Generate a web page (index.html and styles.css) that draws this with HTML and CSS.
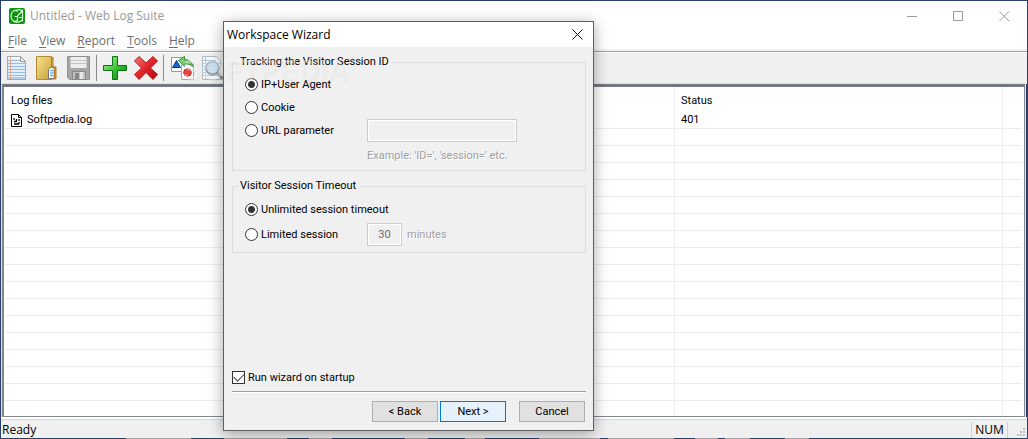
FILE: index.html
```html
<!DOCTYPE html>
<html lang="en">
<head>
<meta charset="utf-8">
<title>Untitled - Web Log Suite</title>
<link rel="stylesheet" href="styles.css">
</head>
<body>
<div class="window">
  <header class="titlebar">
    <svg class="app-icon" viewBox="0 0 16 16" aria-hidden="true">
      <rect width="16" height="16" rx="2" fill="#0c960c"/>
      <path d="M8.500 3.500C6 1 2 3.500 2 8s3.500 6.500 6.500 4.500V8.500H5.500M8.500 8l5-5.500v11M10 9.500h3.500M7 2.500c3-1.500 5-.5 6 .5M4 13c3 2 7 1.500 9-1" fill="none" stroke="#d9f5d9" stroke-width="1.200"/>
    </svg>
    <h1 class="app-title">Untitled - Web Log Suite</h1>
    <div class="window-controls">
      <button class="window-button" type="button" aria-label="Minimize"><svg class="control-icon" viewBox="0 0 11 11"><path d="M0 5.500h10"/></svg></button>
      <button class="window-button" type="button" aria-label="Maximize"><svg class="control-icon" viewBox="0 0 11 11"><path d="M.5.5h9v9h-9z"/></svg></button>
      <button class="window-button" type="button" aria-label="Close"><svg class="control-icon" viewBox="0 0 11 11"><path d="M.5.5l9.500 9.500M10 .5L.5 10"/></svg></button>
    </div>
  </header>
  <nav class="menubar" aria-label="Main menu">
    <button class="menu" type="button"><u>F</u>ile</button>
    <button class="menu" type="button"><u>V</u>iew</button>
    <button class="menu" type="button"><u>R</u>eport</button>
    <button class="menu" type="button"><u>T</u>ools</button>
    <button class="menu" type="button"><u>H</u>elp</button>
  </nav>
  <div class="toolbar" role="toolbar" aria-label="Tools">
    <div class="tool-group">
      <button class="tool" type="button" aria-label="New">
        <svg viewBox="0 0 24 24">
          <path d="M2.500.5h13l5 5v18h-18z" fill="#fff" stroke="#a8a8a8"/>
          <path d="M3 4.500h12M3 7.500h17M3 10.500h17M3 13.500h17M3 16.500h17M3 19.500h17M3 22h17" stroke="#91bde6" stroke-width="1.400"/>
          <path d="M5.500 1v22" stroke="#e2a893"/>
          <path d="M15.500.5v5h5z" fill="#eee" stroke="#999"/>
        </svg>
      </button>
      <button class="tool" type="button" aria-label="Open">
        <svg viewBox="0 0 24 24">
          <defs><linearGradient id="folder" x2="1" y2="1"><stop stop-color="#f8e38e"/><stop offset="1" stop-color="#c7a037"/></linearGradient></defs>
          <path d="M15 4l2-3v10h3v12h-5z" fill="#dba737" stroke="#a87c32"/>
          <path d="M.5.5h15v23H.5z" fill="url(#folder)" stroke="#b28b31"/>
          <path d="M12.500 13.500l2-2h4v11h-6z" fill="#fff" stroke="#777"/>
          <path d="M14 14.500h3M14 17h3M14 19.500h3" stroke="#75b1e4" stroke-width="1.500"/>
          <path d="M18.500 12v11" stroke="#be812c" stroke-width="2"/>
        </svg>
      </button>
      <button class="tool" type="button" aria-label="Save">
        <svg viewBox="0 0 24 24">
          <path d="M.5.5h22v23h-20l-2-2z" fill="#a6a6a6" stroke="#929292"/>
          <path d="M3.500 1h16v11h-16z" fill="#eee"/>
          <path d="M4 4.500h15M4 7.500h15" stroke="#c4c4c4"/>
          <path d="M5.500 15.500h13v8h-13z" fill="#c2c2c2" stroke="#898989"/>
          <path d="M8 17h4v6H8z" fill="#888"/>
          <path d="M13 16h3v7h-3z" fill="#e9e9e9"/>
        </svg>
      </button>
    </div>
    <span class="tool-separator"></span>
    <div class="tool-group">
      <button class="tool" type="button" aria-label="Add">
        <svg viewBox="0 0 24 24">
          <defs><linearGradient id="plus" x2="1" y2="1"><stop stop-color="#baf5ae"/><stop offset=".55" stop-color="#35bd30"/><stop offset="1" stop-color="#078012"/></linearGradient></defs>
          <path d="M9.500.5h5v9h9v5h-9v9h-5v-9h-9v-5h9z" fill="url(#plus)" stroke="#087511"/>
        </svg>
      </button>
      <button class="tool" type="button" aria-label="Delete">
        <svg viewBox="0 0 24 24">
          <defs><linearGradient id="cross" x2="1" y2="1"><stop stop-color="#f77b74"/><stop offset=".5" stop-color="#df2529"/><stop offset="1" stop-color="#af0912"/></linearGradient></defs>
          <path d="M5 .5l7 6.500 7-6.500 4.500 4.500-7 7 7 6.500-4.500 5-7-7-7 7-4.500-5 7-6.500-7-7z" fill="url(#cross)" stroke="#b41b20"/>
        </svg>
      </button>
    </div>
    <span class="tool-separator"></span>
    <div class="tool-group">
      <button class="tool" type="button" aria-label="Convert">
        <svg viewBox="0 0 24 24">
          <path d="M1.500 1.500h11v14h-11z" fill="#fff" stroke="#999"/>
          <path d="M2.500 11.500l4-7 4 7z" fill="#1768cd" stroke="#003994"/>
          <path d="M11.500 8.500h12v15h-12z" fill="#fafafa" stroke="#aaa"/>
          <circle cx="17.500" cy="16.500" r="3.800" fill="#ec4141" stroke="#bb2929"/>
          <path d="M8.500 4.500l6-4v3c5 0 8 3 8 7-2-2-4-3-8-3v3z" fill="#7fce70" stroke="#30933a"/>
        </svg>
      </button>
      <button class="tool" type="button" aria-label="Preview">
        <svg viewBox="0 0 24 24">
          <path d="M1.500.5h14l4 4v19h-18z" fill="#f6fafd" stroke="#b3b9c0"/>
          <path d="M2 4.500h13M2 7.500h17M2 10.500h17M2 13.500h17M2 16.500h17M2 19.500h17" stroke="#a0c3e5"/>
          <path d="M4.500 1v22" stroke="#dfb5a6"/>
          <path d="M16 17l6 6" stroke="#8b8f94" stroke-width="3"/>
          <circle cx="11.500" cy="12" r="6.500" fill="#cfe1f1" fill-opacity=".85" stroke="#8c9aa8" stroke-width="1.600"/>
        </svg>
      </button>
    </div>
  </div>
  <main class="list-view">
    <table class="log-table">
      <colgroup><col><col class="col-status"><col class="col-rest"></colgroup>
      <thead><tr><th scope="col">Log files</th><th scope="col">Status</th><td></td></tr></thead>
      <tbody>
        <tr><td><span class="log-file"><svg class="file-icon" viewBox="0 0 11 13"><path d="M.5.5h7l3 3v9H.5z" fill="#fff" stroke="#000"/><path d="M7.500.5v3h3" fill="none" stroke="#000"/><path d="M3 4v2M5.500 5v2M8 5v2M3 7.500h3M3 10h5M8 8v2" stroke="#000" stroke-width="1.300"/></svg>Softpedia.log</span></td><td>401</td><td></td></tr>
        <tr><td></td><td></td><td></td></tr>
        <tr><td></td><td></td><td></td></tr>
        <tr><td></td><td></td><td></td></tr>
        <tr><td></td><td></td><td></td></tr>
        <tr><td></td><td></td><td></td></tr>
        <tr><td></td><td></td><td></td></tr>
        <tr><td></td><td></td><td></td></tr>
        <tr><td></td><td></td><td></td></tr>
        <tr><td></td><td></td><td></td></tr>
        <tr><td></td><td></td><td></td></tr>
        <tr><td></td><td></td><td></td></tr>
        <tr><td></td><td></td><td></td></tr>
        <tr><td></td><td></td><td></td></tr>
        <tr><td></td><td></td><td></td></tr>
        <tr><td></td><td></td><td></td></tr>
        <tr><td></td><td></td><td></td></tr>
        <tr class="row-partial"><td></td><td></td><td></td></tr>
      </tbody>
    </table>
  </main>
  <footer class="statusbar">
    <span class="status-text">Ready</span>
    <span class="status-num">NUM</span>
    <svg class="grip" viewBox="0 0 9 9" aria-hidden="true"><path d="M6 0h2v2H6zM3 3h2v2H3zM6 3h2v2H6zM0 6h2v2H0zM3 6h2v2H3zM6 6h2v2H6z" fill="#bfbfbf"/></svg>
  </footer>
</div>

<form class="dialog" role="dialog" aria-labelledby="wizard-title">
  <div class="dialog-titlebar">
    <h2 class="dialog-title" id="wizard-title">Workspace Wizard</h2>
    <button class="dialog-close" type="button" aria-label="Close"><svg class="control-icon" viewBox="0 0 11 11"><path d="M.5.5l10 10M10.500 .5l-10 10"/></svg></button>
  </div>
  <div class="dialog-body">
    <fieldset class="group">
      <legend>Tracking the Visitor Session ID</legend>
      <div class="options">
        <label class="option"><input class="radio" type="radio" name="tracking" checked>IP+User Agent</label>
        <label class="option"><input class="radio" type="radio" name="tracking">Cookie</label>
        <div class="option-row">
          <label class="option"><input class="radio" type="radio" name="tracking">URL parameter</label>
          <input class="field field-url" type="text" aria-label="URL parameter name" disabled>
        </div>
        <p class="hint">Example: 'ID=', 'session=' etc.</p>
      </div>
    </fieldset>
    <fieldset class="group group-timeout">
      <legend>Visitor Session Timeout</legend>
      <div class="options">
        <label class="option"><input class="radio" type="radio" name="timeout" checked>Unlimited session timeout</label>
        <div class="option-row">
          <label class="option"><input class="radio" type="radio" name="timeout">Limited session</label>
          <input class="field field-minutes" id="minutes" type="text" value="30" disabled>
          <label class="unit" for="minutes">minutes</label>
        </div>
      </div>
    </fieldset>
    <label class="startup"><input class="checkbox" type="checkbox" checked>Run wizard on startup</label>
    <div class="actions">
      <button class="button" type="button">&lt; Back</button>
      <button class="button button-default" type="submit">Next &gt;</button>
      <button class="button button-cancel" type="button">Cancel</button>
    </div>
  </div>
</form>
<div class="watermark">SOFTPEDIA<sup>®</sup></div>
</body>
</html>
```
FILE: styles.css
```css
* {
  box-sizing: border-box;
}

body {
  position: relative;
  margin: 0;
  font: 11px/16px Roboto, "Liberation Sans", sans-serif;
  color: #000;
}

button,
input {
  margin: 0;
  padding: 0;
  border: 0;
  background: none;
  font: inherit;
  color: inherit;
}

h1,
h2,
p {
  margin: 0;
  font-size: inherit;
  font-weight: 400;
}

svg {
  display: block;
}

/* Main window */
.window {
  display: flex;
  flex-direction: column;
  min-height: 100vh;
  padding: 1px;
  background:
    linear-gradient(90deg, #2b3f69 126px, #a3a3a3 126px 191px, #2b3f69 191px 224px, #a3a3a3 224px 287px, #2b3f69 287px 309px, #a3a3a3 309px 332px, #2b3f69 332px 405px, #a3a3a3 405px 428px, #2b3f69 428px 465px, #a3a3a3 465px 485px, #2b3f69 485px 539px, #a3a3a3 539px 600px, #2b3f69 600px 608px, #a3a3a3 608px 674px, #2b3f69 674px 695px, #a3a3a3 695px 718px, #2b3f69 718px 725px, #a3a3a3 725px 750px, #2b3f69 750px 785px, #a3a3a3 785px 809px, #2b3f69 809px) bottom / 100% 1px no-repeat,
    #2b3f69;
}

.titlebar {
  display: flex;
  align-items: center;
  height: 30px;
  padding-left: 8px;
  background: #fff;
}

.app-icon {
  width: 16px;
  height: 16px;
}

.app-title {
  margin-left: 5px;
  font: 12px/16px "Open Sans", sans-serif;
  color: #999;
}

.window-controls {
  display: flex;
  margin-left: auto;
}

.window-button {
  display: grid;
  place-items: center;
  width: 46px;
  height: 28px;
}

.control-icon {
  width: 11px;
  height: 11px;
  fill: none;
  stroke: #999;
}

.menubar {
  display: flex;
  gap: 12px;
  height: 20px;
  padding-left: 7px;
  background: #fff;
  border-bottom: 2px solid #f0f0f0;
}

.menu {
  font: 12px/20px "Open Sans", sans-serif;
  color: #6d6d6d;
}

.menu u {
  text-underline-offset: 2px;
}

.toolbar {
  display: flex;
  align-items: center;
  height: 33px;
  padding-left: 4px;
  background: #f0f0f0;
  border-top: 1px solid #a0a0a0;
  box-shadow: inset 0 1px #fff;
}

.tool-group {
  display: flex;
  gap: 7px;
}

.tool {
  width: 24px;
  height: 24px;
}

.tool-separator {
  width: 1px;
  height: 26px;
  margin: 0 6px 0 5px;
  background: #8c8c8c;
}

/* Log list */
.list-view {
  flex: 1;
  padding: 0 2px 0 1px;
  background: #fff;
  border: 1px solid #828790;
  border-width: 3px 1px 1px 2px;
  border-top-color: #747980;
  margin: 0 2px 0 1px;
  outline: 1px solid #e3e3e3;
}

.log-table {
  width: 100%;
  border-collapse: separate;
  border-spacing: 0;
  table-layout: fixed;
}

.col-status {
  width: 328px;
}

.col-rest {
  width: 19px;
}

.log-table th,
.log-table td {
  height: 17px;
  padding: 0 6px;
  border-right: 1px solid #ececec;
  border-bottom: 1px solid #ececec;
  font-weight: 400;
  line-height: 16px;
  text-align: left;
}

.log-table thead th,
.log-table thead td {
  height: 25px;
  padding-top: 2px;
  border-bottom: 0;
}

.log-table tr > :last-child {
  border-right: 0;
}

.log-table .row-partial td {
  height: 14px;
  border-bottom: 0;
}

.log-file {
  display: flex;
  align-items: center;
  gap: 5px;
}

.file-icon {
  width: 11px;
  height: 13px;
}

/* Status bar */
.statusbar {
  display: flex;
  align-items: center;
  height: 21px;
  padding: 2px 1px 0;
  background: #f0f0f0;
  border-top: 2px solid #fff;
  box-shadow: inset 0 1px #d7d7d7;
  font: 12px/16px "Open Sans", sans-serif;
}

.status-num {
  width: 37px;
  margin-left: auto;
  border: 1px solid #d2d2d2;
  border-width: 0 1px;
  text-align: center;
}

.grip {
  align-self: end;
  width: 9px;
  height: 9px;
  margin: 0 0 1px 9px;
}

/* Wizard dialog */
.dialog {
  position: absolute;
  top: 21px;
  left: 223px;
  width: 371px;
  background: #f0f0f0;
  border: 1px solid #5f5f5f;
  box-shadow: 0 3px 14px rgb(0 0 0 / 35%);
}

.dialog-titlebar {
  display: flex;
  align-items: center;
  justify-content: space-between;
  height: 25px;
  padding: 0 10px 0 3px;
  background: #fff;
}

.dialog-title {
  font: 12px/16px "Open Sans", sans-serif;
}

.dialog-close .control-icon {
  stroke: #111;
}

.dialog-body {
  padding: 7px 7px 8px 8px;
}

.group {
  min-width: 0;
  margin: 0;
  padding: 0 12px 6px;
  border: 1px solid #dcdcdc;
}

.group legend {
  margin-left: -7px;
  padding: 0 3px 0 2px;
}

.group-timeout {
  margin-top: 7px;
}

.options {
  display: grid;
  padding-top: 3px;
}

.group-timeout .options {
  gap: 2px;
  padding-top: 4px;
}

.option,
.startup {
  display: flex;
  align-items: center;
  gap: 3px;
  height: 23px;
}

.option-row {
  display: flex;
  align-items: center;
}

.option-row .option {
  width: 122px;
}

.radio {
  appearance: none;
  width: 13px;
  height: 13px;
  border: 1px solid #333;
  border-radius: 50%;
  background: #fff;
}

.radio:checked {
  background: radial-gradient(circle, #333 3px, #fff 4px);
}

.field {
  height: 23px;
  border: 1px solid #ccc;
  box-shadow: inset 0 0 0 1px #fff;
  background: #f0f0f0;
  color: #6d6d6d;
}

.field-url {
  width: 150px;
}

.field-minutes {
  width: 35px;
  text-align: center;
}

.hint,
.unit {
  color: #a0a0a0;
  text-shadow: 1px 1px #fff;
}

.hint {
  margin: 6px 0 0 122px;
}

.unit {
  margin-left: 5px;
}

.startup {
  margin-top: 113px;
}

.checkbox {
  appearance: none;
  display: grid;
  place-items: center;
  width: 13px;
  height: 13px;
  border: 1px solid #333;
  background: #fff;
}

.checkbox:checked::before {
  content: "";
  width: 9px;
  height: 5px;
  margin-bottom: 3px;
  border: solid #444;
  border-width: 0 0 1px 1px;
  transform: rotate(-45deg);
}

.actions {
  display: flex;
  justify-content: flex-end;
  gap: 2px;
  margin-top: 2px;
  padding: 9px 1px 0 0;
  border-top: 1px solid #a0a0a0;
  box-shadow: inset 0 1px #fff;
}

.button {
  width: 66px;
  height: 21px;
  background: #e1e1e1;
  border: 1px solid #adadad;
}

.button-default {
  background: #e5f1fb;
  border-color: #0078d7;
}

.button-cancel {
  margin-left: 11px;
}

.watermark {
  position: absolute;
  top: 54px;
  left: 182px;
  font: bold 29px/32px "Liberation Sans", sans-serif;
  color: rgb(255 255 255 / 35%);
  text-shadow: 1px 1px 2px rgb(0 0 0 / 5%);
  pointer-events: none;
}

.watermark sup {
  font-size: 8px;
  line-height: 8px;
  vertical-align: top;
}
```
